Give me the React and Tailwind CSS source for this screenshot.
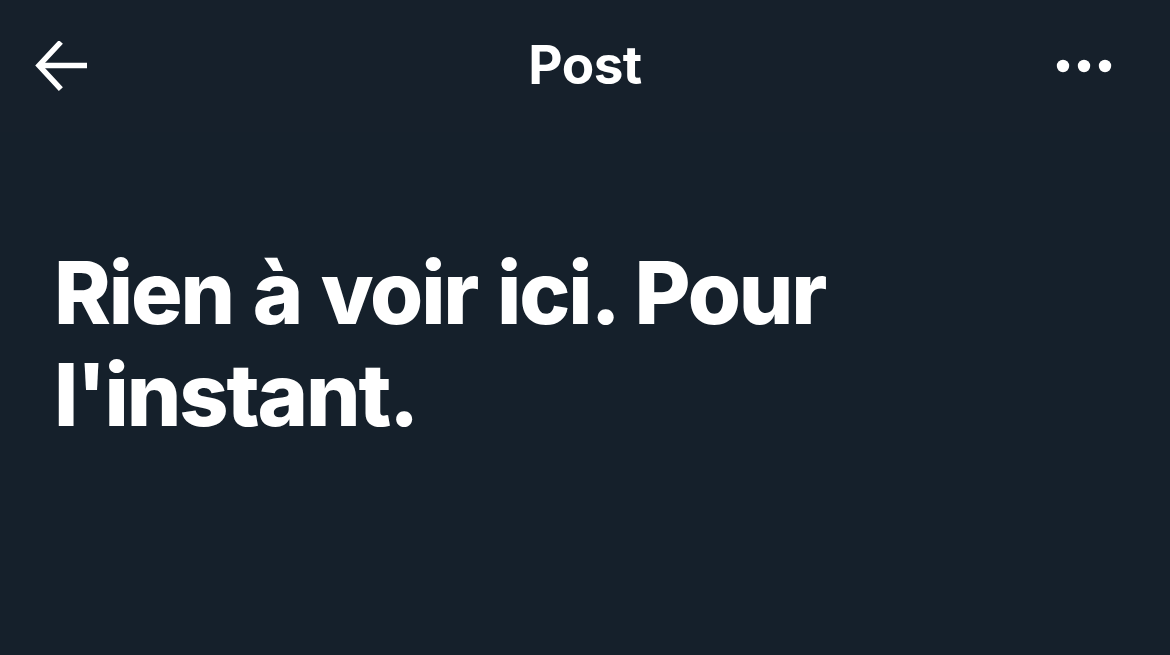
import React from "react";

function BackArrow() {
  return (
    <svg width="56" height="50" viewBox="0 0 56 50" fill="none" className="text-white">
      <path d="M24 3 L4 24.5 L24 46" stroke="currentColor" strokeWidth="5.5" strokeLinecap="square" />
      <path d="M6 24.5 H52" stroke="currentColor" strokeWidth="5.5" />
    </svg>
  );
}

function MoreDots() {
  return (
    <svg width="58" height="14" viewBox="0 0 58 14" fill="white">
      <circle cx="7" cy="7" r="6.2" />
      <circle cx="28" cy="7" r="6.2" />
      <circle cx="49" cy="7" r="6.2" />
    </svg>
  );
}

export default function App() {
  return (
    <div
      className="w-[1170px] h-[655px] overflow-hidden bg-[#15202b] text-white"
      style={{ fontFamily: "Inter, 'Noto Sans', sans-serif" }}
    >
      <header className="h-[132px] grid grid-cols-[1fr_auto_1fr] items-center px-[35px] bg-[#16202b]">
        <div className="flex items-center">
          <BackArrow />
        </div>
        <h1 className="text-[53px] font-bold tracking-[-0.01em] leading-none mt-[-2px]">Post</h1>
        <div className="flex justify-end pr-[21px]">
          <MoreDots />
        </div>
      </header>

      <main className="pl-[54px] pt-[110px]">
        <h2 className="text-[86px] font-extrabold leading-[102px] tracking-[-0.025em] [word-spacing:3px] max-w-[840px]">
          Rien à voir ici. Pour l'instant.
        </h2>
      </main>
    </div>
  );
}
